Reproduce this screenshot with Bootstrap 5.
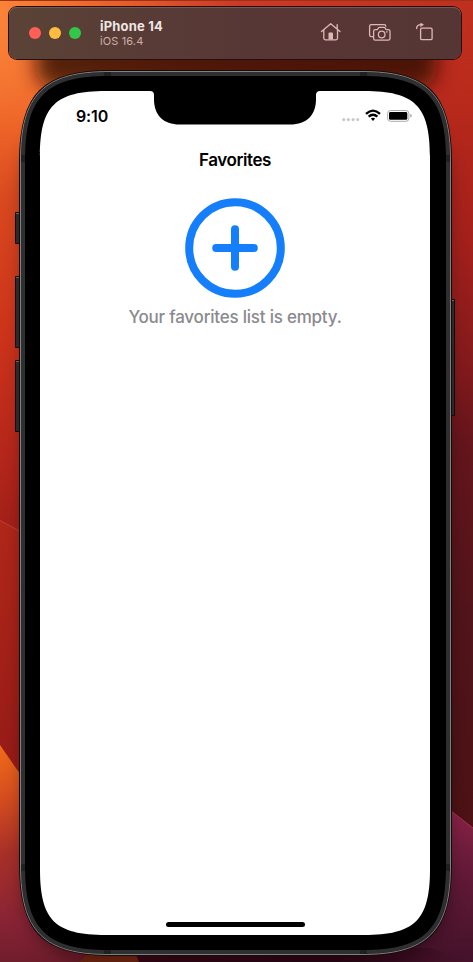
<!DOCTYPE html>
<html lang="en">
<head>
<meta charset="utf-8">
<meta name="viewport" content="width=device-width, initial-scale=1">
<title>iPhone 14 Simulator</title>
<link href="https://cdn.jsdelivr.net/npm/bootstrap@5.3.0/dist/css/bootstrap.min.css" rel="stylesheet">
<style>
body{font-family:Inter,"Liberation Sans",sans-serif;width:473px;height:962px}
.desktop{width:473px;height:962px;background:#a62018}
.sim-bar{margin:7px 12px 0 9px;height:52px;border-radius:8px;padding-left:20px;padding-right:28px;background:linear-gradient(90deg,#5a4336,#583b36 30%,#573635 60%,#563635);box-shadow:0 0 0 1px #2a0e0a,inset 0 1px 0 #735a55}
.dot{width:12px;height:12px;border-radius:50%}
.dot-r{background:#ff5f57}.dot-y{background:#febc40}.dot-g{background:#32c748}
.sim-titles{margin-left:19px}
.sim-name{font-size:13px;line-height:15px;font-weight:700;color:#efe6e4;letter-spacing:.18px}
.sim-os{font-size:11px;line-height:14px;color:#cfaea9;letter-spacing:.12px}
.device{width:390px;height:844px;margin:32px 0 0 40px}
.status{height:47px;padding:0 18px 0 36px}
.clock{font-size:16px;font-weight:600;line-height:20px;padding-top:15px;color:#000;letter-spacing:-.13px}
.signals{margin-top:16px}
.page-title{font-size:17px;font-weight:600;line-height:22px;margin-top:11px;color:#000;letter-spacing:-.42px}
.plus{margin-top:27px}
.empty-note{font-size:17px;font-weight:500;line-height:22px;margin-top:8px;color:#8a8a8e;letter-spacing:-.22px}
.home-line{width:139px;height:5px;border-radius:3px;background:#000;margin-bottom:8px}
</style>
<script src="https://cdn.jsdelivr.net/npm/bootstrap@5.3.0/dist/js/bootstrap.bundle.min.js"></script>
</head>
<body class="m-0 overflow-hidden">
<div class="desktop position-relative overflow-hidden">
<svg class="position-absolute top-0 start-0" width="473" height="962" viewBox="0 0 473 962" aria-hidden="true">
<defs>
<linearGradient id="left" x1="0" y1="0" x2="0" y2="1"><stop offset="0" stop-color="#f8803a"/><stop offset=".13" stop-color="#ee6428"/><stop offset=".21" stop-color="#d9481f"/><stop offset=".35" stop-color="#cc331b"/><stop offset=".47" stop-color="#b5271b"/><stop offset=".56" stop-color="#a01f18"/></linearGradient>
<linearGradient id="right" x1="0" y1="0" x2="0" y2="1"><stop offset="0" stop-color="#c83a24"/><stop offset=".03" stop-color="#bb2c1d"/><stop offset=".1" stop-color="#b8291b"/><stop offset=".25" stop-color="#a4201b"/><stop offset=".38" stop-color="#831a1c"/><stop offset=".46" stop-color="#65151c"/><stop offset=".65" stop-color="#50141a"/><stop offset=".86" stop-color="#4c1215"/></linearGradient>
<linearGradient id="top" x1="0" y1="0" x2="1" y2="0"><stop offset="0" stop-color="#fa8438"/><stop offset=".25" stop-color="#e8602c"/><stop offset=".5" stop-color="#cb3a28"/><stop offset="1" stop-color="#be2f1f"/></linearGradient>
<linearGradient id="fade" x1="0" y1="0" x2="0" y2="1"><stop offset="0" stop-color="#fff"/><stop offset="1" stop-color="#000"/></linearGradient>
<mask id="fadeDown"><rect width="473" height="130" fill="url(#fade)"/></mask>
<linearGradient id="across" x1="0" y1="0" x2="1" y2="0"><stop offset="0" stop-color="#f36c2c"/><stop offset=".35" stop-color="#cb3a28"/><stop offset="1" stop-color="#b9291b"/></linearGradient>
<linearGradient id="mid" x1="0" y1="0" x2="0" y2="1"><stop offset="0" stop-color="#b0271a"/><stop offset=".2" stop-color="#a82318"/><stop offset=".6" stop-color="#951a18"/><stop offset="1" stop-color="#8a1428"/></linearGradient>
<linearGradient id="low" x1="0" y1="0" x2="0" y2="1"><stop offset="0" stop-color="#f06c1a"/><stop offset=".25" stop-color="#d54c20"/><stop offset=".5" stop-color="#a83028"/><stop offset=".8" stop-color="#8a2435"/><stop offset="1" stop-color="#701d2c"/></linearGradient>
<linearGradient id="plum" x1="0" y1="0" x2="0" y2="1"><stop offset="0" stop-color="#8c2347"/><stop offset=".4" stop-color="#651a38"/><stop offset="1" stop-color="#43122a"/></linearGradient>
<linearGradient id="base" x1="0" y1="0" x2="1" y2="0"><stop offset="0" stop-color="#3a0618"/><stop offset=".6" stop-color="#2e0616"/><stop offset="1" stop-color="#48132c"/></linearGradient>
<filter id="soft" x="-20%" y="-40%" width="140%" height="180%"><feGaussianBlur stdDeviation="10"/></filter>
</defs>
<rect width="240" height="962" fill="url(#left)"/>
<rect x="240" width="233" height="962" fill="url(#right)"/>
<rect x="30" width="410" height="130" fill="url(#across)"/>
<rect width="473" height="130" fill="url(#top)" mask="url(#fadeDown)"/>
<path d="M0 520 240 654V962H0Z" fill="url(#mid)"/>
<path d="M0 520.500 22 532.500" stroke="#b83a2c" stroke-width="1.200"/>
<path d="M0 745 150 962H0Z" fill="url(#low)"/>
<path d="M445 806 473 828V962H300V900Z" fill="url(#plum)"/>
<path d="M451 811 473 828" stroke="#a8304c"/>
<path d="M90 950H139L146 962H80Z" fill="#7c2a12"/>
<path d="M133 948H430L473 962H139Z" fill="url(#base)"/>
<rect x="36" y="34" width="401" height="54" rx="20" fill="#290706" opacity=".78" filter="url(#soft)"/>
<rect x="25" y="110" width="421" height="850" rx="70" fill="#100005" opacity=".5" filter="url(#soft)"/>
<path d="M0 .5H473" stroke="#9c3317"/>
<g fill="#292b2b" stroke="#150806"><path d="M15.500 212.500h6v31h-6zM15.500 276.500h6v71h-6zM15.500 360.500h6v71h-6zM449.500 299.500h5v116h-5z"/></g>
<path d="M16 213.500h4M16 277.500h4M16 361.500h4M451 300.500h3" stroke="#666"/>
<path d="M20 161C20 94 43 71 110 71H361C428 71 451 94 451 161V865C451 932 428 955 361 955H110C43 955 20 932 20 865Z" fill="#2e2f30" stroke="#160908" stroke-width="2"/>
<path d="M20.500 161C20.500 94.500 43.500 71.500 110 71.500H361C427.500 71.500 450.500 94.500 450.500 161V865C450.500 931.500 427.500 954.500 361 954.500H110C43.500 954.500 20.500 931.500 20.500 865Z" fill="none" stroke="#808183"/>
<path d="M104 72h7v4h-7zM360 72h7v4h-7zM104 950h7v4h-7zM360 950h7v4h-7zM21 155h4v7h-4zM446 155h4v7h-4zM21 864h4v7h-4zM446 864h4v7h-4z" fill="#1f2021"/>
<path d="M25 160C25 97 46 76 109 76H362C425 76 446 97 446 160V866C446 929 425 950 362 950H109C46 950 25 929 25 866Z"/>
<path d="M40 157C40 106 55 91 106 91H150Q154 91 154 95V99C154 115 163 124.500 180 124.500H290C307 124.500 316 115 316 99V95Q316 91 320 91H364C415 91 430 106 430 157V869C430 920 415 935 364 935H106C55 935 40 920 40 869Z" fill="#fff"/>
</svg>
<div class="position-relative d-flex flex-column">
<header class="sim-bar d-flex align-items-center">
<div class="d-flex gap-2"><span class="dot dot-r"></span><span class="dot dot-y"></span><span class="dot dot-g"></span></div>
<div class="sim-titles"><div class="sim-name">iPhone 14</div><div class="sim-os">iOS 16.4</div></div>
<svg class="ms-auto" width="113" height="20" viewBox="320 23 113 20" fill="none" stroke="#deb8b4" stroke-width="1.300" stroke-linecap="round" stroke-linejoin="round" aria-label="Home, screenshot, rotate">
<path d="M321.500 31.500 330.700 23.700 340 31.500M323.800 30V38.300Q323.800 39.800 325.300 39.800H336Q337.500 39.800 337.500 38.300V30M337.200 28.500V24.600"/>
<path d="M328.500 39.500V33.500Q328.500 32.500 329.500 32.500H332Q333 32.500 333 33.500V39.500Z" fill="#deb8b4" stroke="none"/>
<path d="M372.500 36.700H371.200Q369.600 36.700 369.600 35.100V26.200Q369.600 24.600 371.200 24.600H384.200Q385.800 24.600 385.800 26.200"/>
<path d="M375.300 29.600H377.300L378.500 27.900Q378.800 27.400 379.500 27.400H384Q384.700 27.400 385 27.900L386.200 29.600H388.200Q390 29.600 390 31.300V38.500Q390 40.200 388.200 40.200H375.300Q373.600 40.200 373.600 38.500V31.300Q373.600 29.600 375.300 29.600Z"/>
<circle cx="381.700" cy="34.500" r="3.300"/><circle cx="386.900" cy="31.900" r=".8" fill="#deb8b4" stroke="none"/>
<rect x="420.600" y="28.200" width="11.500" height="11.500" rx="1.300"/>
<path d="M416.600 28.600C416.600 25.900 418.300 24.600 421.200 24.600"/><path d="M420.800 23 423.600 24.700 420.800 26.600Z" fill="#deb8b4" stroke-width=".5"/>
</svg>
</header>
<main class="device d-flex flex-column align-items-center">
<div class="status d-flex justify-content-between w-100">
<div class="clock">9:10</div>
<svg class="signals" width="70" height="16" viewBox="342 107 70 16" aria-label="Wi-Fi and battery">
<g fill="#cacacc"><circle cx="343.800" cy="119.600" r="1.600"/><circle cx="348.400" cy="119.600" r="1.600"/><circle cx="353.100" cy="119.600" r="1.600"/><circle cx="357.700" cy="119.600" r="1.600"/></g>
<g fill="none" stroke="#000" stroke-width="2.300"><path d="M366 113.900Q373 107.300 380 113.900M368.600 116.700Q373 112.800 377.400 116.700"/></g>
<path d="M370.900 118.600Q373 116.900 375.100 118.600L373 121Z"/>
<rect x="387.600" y="110.500" width="21.300" height="10.800" rx="3" fill="none" stroke="#aaa"/><rect x="389" y="112" width="18.300" height="7.800" rx="1.400"/><path d="M410.200 114Q411.900 114.400 411.900 115.700T410.200 117.500Z" fill="#aaa"/>
</svg>
</div>
<h1 class="page-title mb-0">Favorites</h1>
<svg class="plus" width="100" height="100" viewBox="0 0 100 100" fill="none" stroke="#157efb" stroke-width="8" aria-hidden="true"><circle cx="50" cy="50" r="45.800"/><path d="M31.200 50H68.800M50 31.200V68.800" stroke-linecap="round"/></svg>
<p class="empty-note mb-0">Your favorites list is empty.</p>
<div class="home-line mt-auto"></div>
</main>
</div>
</div>
</body>
</html>
